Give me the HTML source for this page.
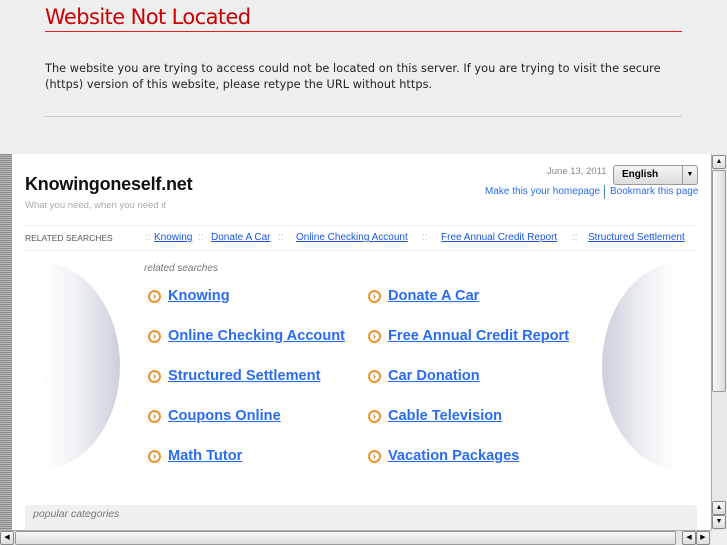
<!DOCTYPE html>
<html><head><meta charset="utf-8"><style>
*{margin:0;padding:0;box-sizing:border-box}
body{width:727px;height:545px;overflow:hidden;background:#efefef;position:relative;font-family:"Liberation Sans",sans-serif}
h1{position:absolute;left:45px;top:5px;font-family:"DejaVu Sans",sans-serif;font-weight:normal;font-size:21px;color:#c00;letter-spacing:-0.6px}
.rl{position:absolute;left:45px;top:31px;width:637px;height:1px;background:#e02020}
.msg{position:absolute;left:45px;top:61px;font-family:"DejaVu Sans",sans-serif;font-size:11.3px;line-height:16px;color:#222;width:630px;letter-spacing:0.05px}
.gl{position:absolute;left:45px;top:116px;width:637px;height:1px;background:#ccc}
.frame{position:absolute;left:0;top:154px;width:711px;height:376px;background:#fff}
.strip{position:absolute;left:0;top:154px;width:12px;height:391px;background:repeating-linear-gradient(#888 0 1px,#bbb 1px 2px)}
.vs{position:absolute;left:711px;top:154px;width:16px;height:376px;background:#e8e8e8;border-left:1px solid #aaa}
.btn{position:absolute;width:14px;height:14px;background:linear-gradient(#fafafa,#ddd);border:1px solid #888;border-radius:2px;font-size:7px;text-align:center;line-height:12px;color:#000}
.hs{position:absolute;left:0;top:530px;width:711px;height:15px;background:#e8e8e8;border-top:1px solid #aaa}
a{color:#1a55e0;text-decoration:underline}
.s{position:absolute;font-size:10px;white-space:nowrap}
.r{position:absolute;top:232px;font-size:10px;white-space:nowrap;color:#bbb}
.big{position:absolute;font-size:14.6px;font-weight:bold;white-space:nowrap}
.big a{color:#2a6cf0}
.ar{position:absolute;width:13px;height:13px;border-radius:50%;border:2px solid #e89530;color:#d07000;font-size:9px;line-height:9px;text-align:center;font-weight:bold}
.semi{position:absolute;top:262px;width:80px;height:208px}
</style></head><body>
<h1>Website Not Located</h1>
<div class="rl"></div>
<div class="msg">The website you are trying to access could not be located on this server. If you are trying to visit the secure (https) version of this website, please retype the URL without https.</div>
<div class="gl"></div>
<div class="frame"></div>
<div class="strip"></div>
<div class="semi" style="left:40px;border-radius:0 80px 80px 0/0 104px 104px 0;background:linear-gradient(90deg,#fff,#f3f4f7 40%,#ccd0dc)"></div>
<div class="semi" style="left:602px;border-radius:80px 0 0 80px/104px 0 0 104px;background:linear-gradient(270deg,#fff,#f3f4f7 40%,#ccd0dc)"></div>
<div style="position:absolute;left:25px;top:174px;font-size:18px;font-weight:bold;color:#111;letter-spacing:-0.2px">Knowingoneself.net</div>
<div class="s" style="left:25px;top:200px;font-size:9.5px;color:#aaa">What you need, when you need it</div>
<div class="s" style="left:547px;top:166px;font-size:9.5px;color:#888">June 13, 2011</div>
<div style="position:absolute;left:613px;top:165px;width:85px;height:20px;border:1px solid #999;border-radius:3px;background:linear-gradient(#f4f4f4,#ddd);font-size:10px;font-weight:bold;line-height:18px;padding-left:8px">English<span style="position:absolute;right:0;top:0;width:15px;height:18px;border-left:1px solid #999;font-size:7px;text-align:center">▼</span></div>
<div class="s" style="left:485px;top:186px;font-size:10px;color:#2a6cf0">Make this your homepage</div>
<div style="position:absolute;left:604px;top:185px;width:1px;height:14px;background:#4a8aa0"></div>
<div class="s" style="left:610px;top:186px;font-size:10px;color:#2a6cf0">Bookmark this page</div>
<div style="position:absolute;left:25px;top:225px;width:672px;height:1px;background:#eee"></div>
<div style="position:absolute;left:25px;top:250px;width:672px;height:1px;background:#eee"></div>
<div class="s" style="left:25px;top:233px;font-size:8.5px;color:#555">RELATED SEARCHES</div>
<div class="r" style="left:145px">::</div><div class="r" style="left:154px"><a href="#">Knowing</a></div>
<div class="r" style="left:198px">::</div><div class="r" style="left:211px"><a href="#">Donate A Car</a></div>
<div class="r" style="left:278px">::</div><div class="r" style="left:296px"><a href="#">Online Checking Account</a></div>
<div class="r" style="left:422px">::</div><div class="r" style="left:441px"><a href="#">Free Annual Credit Report</a></div>
<div class="r" style="left:572px">::</div><div class="r" style="left:588px"><a href="#">Structured Settlement</a></div>
<div class="s" style="left:144px;top:263px;font-size:10px;font-style:italic;color:#777">related searches</div>

<div class="ar" style="left:148px;top:290px">›</div><div class="big" style="left:168px;top:288px"><a href="#">Knowing</a></div>
<div class="ar" style="left:148px;top:330px">›</div><div class="big" style="left:168px;top:328px"><a href="#">Online Checking Account</a></div>
<div class="ar" style="left:148px;top:370px">›</div><div class="big" style="left:168px;top:368px"><a href="#">Structured Settlement</a></div>
<div class="ar" style="left:148px;top:410px">›</div><div class="big" style="left:168px;top:408px"><a href="#">Coupons Online</a></div>
<div class="ar" style="left:148px;top:450px">›</div><div class="big" style="left:168px;top:448px"><a href="#">Math Tutor</a></div>
<div class="ar" style="left:368px;top:290px">›</div><div class="big" style="left:388px;top:288px"><a href="#">Donate A Car</a></div>
<div class="ar" style="left:368px;top:330px">›</div><div class="big" style="left:388px;top:328px"><a href="#">Free Annual Credit Report</a></div>
<div class="ar" style="left:368px;top:370px">›</div><div class="big" style="left:388px;top:368px"><a href="#">Car Donation</a></div>
<div class="ar" style="left:368px;top:410px">›</div><div class="big" style="left:388px;top:408px"><a href="#">Cable Television</a></div>
<div class="ar" style="left:368px;top:450px">›</div><div class="big" style="left:388px;top:448px"><a href="#">Vacation Packages</a></div>

<div style="position:absolute;left:25px;top:505px;width:672px;height:30px;background:#f0f0f0;border-radius:3px"></div>
<div class="s" style="left:33px;top:508px;font-size:10.5px;font-style:italic;color:#777">popular categories</div>
<div class="vs"></div>
<div class="btn" style="left:712px;top:155px">▲</div>
<div style="position:absolute;left:712px;top:170px;width:14px;height:222px;border:1px solid #999;background:linear-gradient(90deg,#f8f8f8,#ddd);border-radius:2px"></div>
<div class="btn" style="left:712px;top:501px">▲</div>
<div class="btn" style="left:712px;top:515px">▼</div>
<div class="hs"></div>
<div class="btn" style="left:0;top:531px">◀</div>
<div style="position:absolute;left:15px;top:531px;width:661px;height:14px;border:1px solid #999;background:linear-gradient(#f8f8f8,#ddd);border-radius:2px"></div>
<div class="btn" style="left:682px;top:531px">◀</div>
<div class="btn" style="left:696px;top:531px">▶</div>
</body></html>
